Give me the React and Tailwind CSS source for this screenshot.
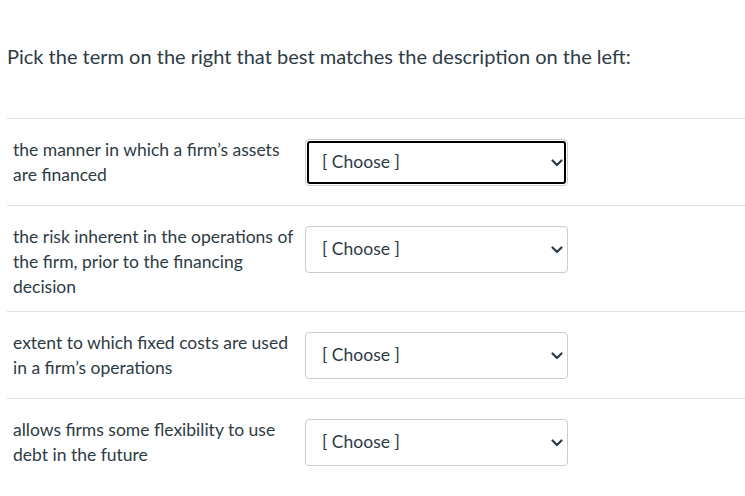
const rows = [
  { text: 'the manner in which a firm\u2019s assets are financed', focused: true },
  { text: 'the risk inherent in the operations of the firm, prior to the financing decision' },
  { text: 'extent to which fixed costs are used in a firm\u2019s operations' },
  { text: 'allows firms some flexibility to use debt in the future' },
]

function Choose({ focused }) {
  return (
    <div className="relative mt-[2px] mb-[7px] h-[47px] w-[263px] shrink-0 rounded-[4px] border border-[#c7cdd1] bg-white">
      {focused && (
        <div className="absolute inset-[1px] rounded-[3px] border-2 border-black"></div>
      )}
      <div className="flex h-full items-center pl-[16px] text-[17.5px] text-[#2d3b45]">[ Choose ]</div>
      <svg
        className="absolute right-[4px] top-1/2 -translate-y-1/2"
        width="12"
        height="8"
        viewBox="0 0 12 8"
        fill="none"
      >
        <path d="M1.5 1.5 L6 6 L10.5 1.5" stroke="#2d3b45" strokeWidth="2.2" strokeLinecap="round" strokeLinejoin="round" />
      </svg>
    </div>
  )
}

export default function App() {
  return (
    <div className="min-h-[496px] bg-white pl-[7px] text-[#2d3b45]" style={{ fontFamily: 'Lato, "Noto Sans", sans-serif' }}>
      <p className="pt-[42px] pb-[48px] text-[20px] leading-[28px]">
        Pick the term on the right that best matches the description on the left:
      </p>
      {rows.map((row, i) => (
        <div key={i} className="flex items-start border-t border-[#dfe2e4] pt-[18px] pb-[12px] pl-[6px]">
          <div className="w-[292px] shrink-0 pr-[8px] text-[17.5px] leading-[25px]">{row.text}</div>
          <Choose focused={row.focused} />
        </div>
      ))}
    </div>
  )
}
